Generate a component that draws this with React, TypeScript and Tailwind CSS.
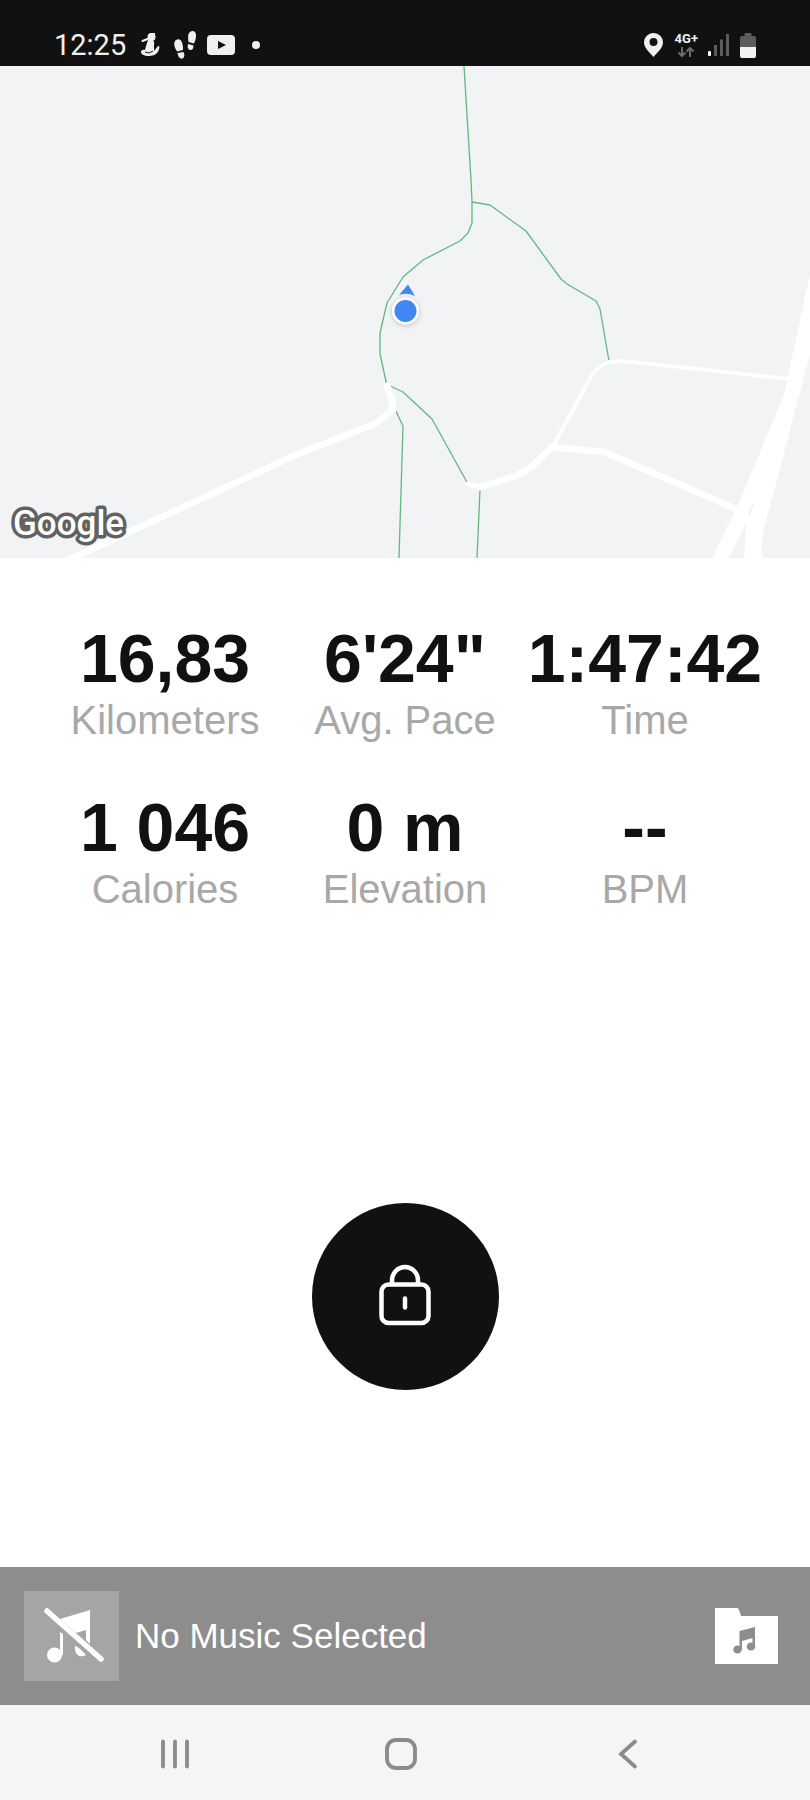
const stats = [
  { value: '16,83', label: 'Kilometers' },
  { value: '6\'24"', label: 'Avg. Pace' },
  { value: '1:47:42', label: 'Time' },
  { value: '1 046', label: 'Calories' },
  { value: '0 m', label: 'Elevation' },
  { value: '--', label: 'BPM' },
]

export default function App() {
  return (
    <div className="flex min-h-screen flex-col bg-white font-['Liberation_Sans',sans-serif] text-[#111111]">
      <StatusBar />
      <RouteMap />
      <main className="flex flex-1 flex-col">
        <dl className="grid grid-cols-3 gap-y-[45px] px-[45px] pt-[62px] pb-28 text-center">
          {stats.map((s) => (
            <div key={s.label} className="flex flex-col-reverse">
              <dt className="text-[40px] leading-[48px] text-[#a8a8a8]">{s.label}</dt>
              <dd className="text-[68px] leading-[76px] font-bold whitespace-nowrap">{s.value}</dd>
            </div>
          ))}
        </dl>
        <div className="flex flex-1 items-center justify-center">
          <button
            type="button"
            aria-label="Unlock"
            className="flex size-[187px] items-center justify-center rounded-full bg-[#111111] text-white"
          >
            <LockIcon />
          </button>
        </div>
      </main>
      <MusicBar />
      <NavBar />
    </div>
  )
}

function StatusBar() {
  return (
    <header className="flex h-[66px] items-center justify-between bg-[#111111] px-[54px] pt-6 font-[Roboto,sans-serif] text-[#f0f0f0]">
      <div className="flex items-center">
        <time className="text-[29px] leading-8">12:25</time>
        <svg className="ml-[14px]" width="20" height="26" viewBox="0 0 20 26" fill="currentColor">
          <circle cx="11.500" cy="5" r="4" />
          <path d="M10 1h5v6l-4 2z" />
          <path d="M8 8c5-1 7 1 6 5-.3 2 .5 4 0 6l4-5 1.500.5C19 20 16 24 9 24 4 24 1 22 1 20c0-2 2-2.500 4-2 .5-2 1-4 3-10z" />
          <path d="M2.500 9l5-2" stroke="currentColor" strokeWidth="2" strokeLinecap="round" />
          <path d="M5 20l4 1 4-2" fill="none" stroke="#111111" strokeWidth="1" />
        </svg>
        <svg className="ml-[14px]" width="23" height="30" viewBox="0 0 23 30" fill="currentColor">
          <path d="M16 2c3-2.500 6.500-.5 6 4 0 3-1 5-2 7.500L14.500 12c-.5-4-1-8 1.500-10z" />
          <path d="M14 14l5.500 1.500c0 3.500-1.500 5-3.500 4.500s-3-3-2-6z" />
          <path d="M2 10c3-2 5.500 0 6.500 4 .5 2 .5 4 .5 6l-6 1.500C1 18-1.500 13 2 10z" />
          <path d="M3.500 23L9.500 22c1.500 3 1 5.500-1 6.500S4 27 3.500 23z" />
        </svg>
        <svg className="ml-[10px]" width="28" height="20" viewBox="0 0 28 20">
          <rect width="28" height="20" rx="4" fill="currentColor" />
          <path d="M11 6l8 4-8 4z" fill="#111111" />
        </svg>
        <span className="ml-[17px] size-2 rounded-full bg-[#f0f0f0]" />
      </div>
      <div className="flex items-center">
        <svg width="19" height="24" viewBox="0 0 19 24" fill="currentColor">
          <path
            fillRule="evenodd"
            d="M9.500 0A9.300 9.300 0 0 0 0 9.300C0 15 5 18.500 9.500 24 14 18.500 19 15 19 9.300A9.300 9.300 0 0 0 9.500 0zm0 5a4 4 0 1 1 0 8 4 4 0 0 1 0-8z"
          />
        </svg>
        <div className="ml-3 flex flex-col items-center gap-[2px]">
          <span className="text-[13px] leading-3 font-bold">4G+</span>
          <svg width="16" height="10" viewBox="0 0 16 10" fill="none" stroke="#6c6c6c" strokeWidth="2">
            <path d="M4 0v9M.5 5.500L4 9l3.500-3.500M12 10V1M8.500 4.500L12 1l3.500 3.500" />
          </svg>
        </div>
        <svg className="ml-[10px]" width="21" height="22" viewBox="0 0 21 22">
          <rect x="0" y="17" width="3" height="5" rx="1" fill="#ffffff" />
          <path d="M6 11h3v11H6zM12 5.500h3V22h-3zM18 0h3v22h-3z" fill="#5c5c5c" />
        </svg>
        <svg className="ml-[11px]" width="16" height="25" viewBox="0 0 16 25">
          <path d="M4.500 1q0-1 1-1h5q1 0 1 1v2H14q2 0 2 2v9H0V5q0-2 2-2h2.500z" fill="#5c5c5c" />
          <path d="M0 14h16v9q0 2-2 2H2q-2 0-2-2z" fill="#f2f2f2" />
        </svg>
      </div>
    </header>
  )
}

function RouteMap() {
  return (
    <svg
      role="img"
      aria-label="Route map"
      className="h-[492px] w-full shrink-0 bg-[#f1f3f4]"
      viewBox="0 66 810 492"
      preserveAspectRatio="xMidYMid slice"
    >
      <defs>
        <filter id="pin-shadow" x="-50%" y="-50%" width="200%" height="200%">
          <feDropShadow dx="0" dy="1" stdDeviation="2.500" floodOpacity="0.22" />
        </filter>
        <filter id="road-edge">
          <feDropShadow dx="0" dy="0" stdDeviation="0.7" floodOpacity="0.08" />
        </filter>
      </defs>

      {/* trails */}
      <g fill="none" stroke="#62b882" strokeWidth="1.300" strokeLinejoin="round">
        <path d="M464 66L471 180 472 202V223L468 233 460 241 423 260 403 277 387 303 380 333V354L387 386" />
        <path d="M472 202L490 205 526 231 561 279 567 284 596 301 600 309 609 361" />
        <path d="M390 386L403 392 432 419 468 484" />
        <path d="M395 409L403 426 399 558" />
        <path d="M480 490L477 558" />
      </g>

      {/* roads */}
      <g fill="none" stroke="#ffffff" strokeLinejoin="round" strokeLinecap="round" filter="url(#road-edge)">
        <path strokeWidth="7" d="M60 564L140 527 300 453 375 424 393 410 392 400 387 386" />
        <path strokeWidth="5" d="M468 484L480 487" />
        <path strokeWidth="7" d="M480 487L516 476 531 467 552 447 604 452 672 481 745 513" />
        <path strokeWidth="4" d="M553 446L592 375 599 367 609 362 622 361 690 368 788 379" />
        <path
          stroke="none"
          fill="#ffffff"
          d="M810 273L787 380 783 397 737 507 711 560H728L746 523 744 560H764L761 548 764 528 778 477 792 423 812 347z"
        />
      </g>
      <path d="M753 504L749 515" stroke="#eceeef" strokeWidth="1.500" />

      {/* current position */}
      <path d="M408 284.500L415 296Q407 292 399 295z" fill="#4285f4" />
      <circle cx="405.500" cy="311" r="13.500" fill="#ffffff" filter="url(#pin-shadow)" />
      <circle cx="405.500" cy="311" r="11" fill="#4285f4" />

      <text
        x="13"
        y="535"
        fontFamily="Roboto, sans-serif"
        fontSize="35"
        fontWeight="500"
        fill="#ffffff"
        stroke="#616161"
        strokeWidth="7"
        strokeLinejoin="round"
        paintOrder="stroke"
      >
        Google
      </text>
    </svg>
  )
}

function LockIcon() {
  return (
    <svg width="52" height="64" viewBox="0 0 52 64" fill="none" stroke="currentColor" strokeWidth="4.500">
      <rect x="2.500" y="20.500" width="47" height="38.500" rx="7" />
      <path d="M13 20.500v-4a13 13.500 0 0 1 26 0v4" />
      <path d="M26 34.500v9" strokeLinecap="round" />
    </svg>
  )
}

function MusicBar() {
  return (
    <section className="flex h-[138px] items-center bg-[#8d8d8d] pr-8 pl-6 text-white">
      <svg className="shrink-0 bg-[#a5a5a5]" width="95" height="90" viewBox="0 0 95 90" fill="currentColor">
        <path d="M36 28L66 19V53L62 49V39L52 42z" />
        <path d="M36 41L39 43V64H36z" />
        <circle cx="30.500" cy="64" r="7.500" />
        <path d="M51 55Q54 55 62 64 58 66 55 65 50 62 51 55z" />
        <path d="M23 20L77 68" stroke="currentColor" strokeWidth="5.500" strokeLinecap="round" />
      </svg>
      <p className="ml-4 text-[35px] leading-10">No Music Selected</p>
      <button type="button" aria-label="Choose music" className="ml-auto">
        <svg width="63" height="56" viewBox="0 0 63 56" fill="none">
          <path d="M0 0H22Q23.500 0 24 2L26 8H63V56H0z" fill="#ffffff" />
          <g fill="#8d8d8d">
            <path d="M24.500 23L40 19V38H37.500V30L27 33V41H24.500z" />
            <ellipse cx="22.500" cy="41.500" rx="4.300" ry="4" />
            <ellipse cx="36" cy="38.500" rx="4.300" ry="4" />
          </g>
        </svg>
      </button>
    </section>
  )
}

function NavBar() {
  return (
    <nav className="grid h-[95px] grid-cols-3 items-center bg-[#f5f5f5] pt-[2px] pr-[70px] pl-[62px] text-[#8b8b8b]">
      <NavButton label="Recent apps">
        <path d="M4 3.500V28.500M16 3.500V28.500M28 3.500V28.500" />
      </NavButton>
      <NavButton label="Home">
        <rect x="2" y="2" width="28" height="28" rx="9" />
      </NavButton>
      <NavButton label="Back">
        <path d="M24 3.500L10 16 24 28.500" />
      </NavButton>
    </nav>
  )
}

function NavButton({ label, children }: { label: string; children: React.ReactNode }) {
  return (
    <button type="button" aria-label={label} className="flex justify-center">
      <svg
        width="32"
        height="32"
        viewBox="0 0 32 32"
        fill="none"
        stroke="currentColor"
        strokeWidth="3.800"
        strokeLinecap="round"
      >
        {children}
      </svg>
    </button>
  )
}
